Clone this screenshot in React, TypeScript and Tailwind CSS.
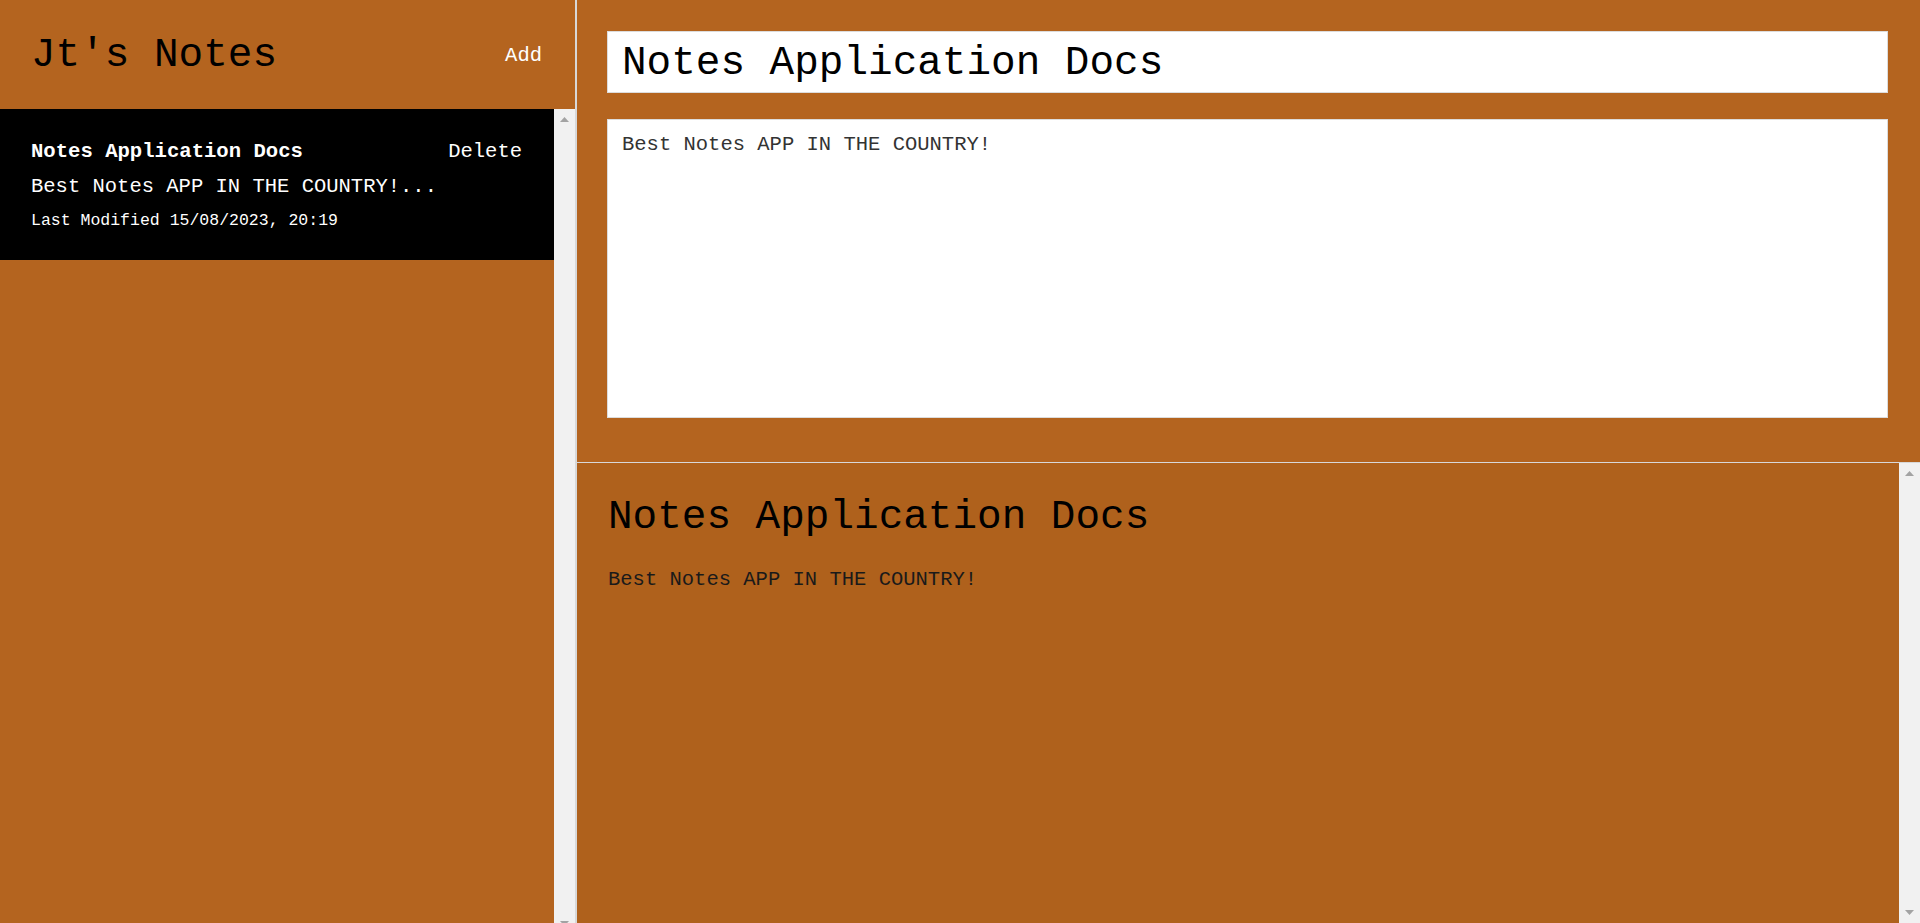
import { useState } from "react";

type Note = {
  id: number;
  title: string;
  body: string;
  lastModified: string;
};

const initialNotes: Note[] = [
  {
    id: 1,
    title: "Notes Application Docs",
    body: "Best Notes APP IN THE COUNTRY!",
    lastModified: "15/08/2023, 20:19",
  },
];

function Arrow({ dir }: { dir: "up" | "down" }) {
  return (
    <svg width="9" height="5" viewBox="0 0 9 5">
      <polygon points={dir === "up" ? "4.5,0 9,5 0,5" : "0,0 9,0 4.5,5"} fill="#a3a3a3" />
    </svg>
  );
}

function Scrollbar() {
  return (
    <div className="flex w-[21px] shrink-0 flex-col bg-[#f1f1f1]">
      <div className="flex h-[21px] items-center justify-center">
        <Arrow dir="up" />
      </div>
      <div className="flex-1" />
      <div className="flex h-[21px] items-center justify-center">
        <Arrow dir="down" />
      </div>
    </div>
  );
}

export default function App() {
  const [notes, setNotes] = useState<Note[]>(initialNotes);
  const [activeId, setActiveId] = useState<number>(1);

  const active = notes.find((n) => n.id === activeId) ?? notes[0];

  function update(field: "title" | "body", value: string) {
    setNotes((prev) => prev.map((n) => (n.id === activeId ? { ...n, [field]: value } : n)));
  }

  function addNote() {
    const id = Date.now();
    setNotes((prev) => [
      { id, title: "Untitled", body: "", lastModified: new Date().toLocaleString("en-GB").slice(0, 17) },
      ...prev,
    ]);
    setActiveId(id);
  }

  function deleteNote(id: number) {
    setNotes((prev) => prev.filter((n) => n.id !== id));
  }

  return (
    <div className="flex h-[923px] w-full overflow-hidden bg-[#b4641f] font-['Liberation_Mono','DejaVu_Sans_Mono',monospace]">
      {/* sidebar */}
      <div className="flex w-[577px] shrink-0 flex-col border-r-2 border-[#d8d8d8]">
        <div className="flex h-[109px] shrink-0 items-center justify-between pl-[31px] pr-[33px]">
          <h1 className="mt-[2px] text-[41px] leading-none text-black">Jt's Notes</h1>
          <button onClick={addNote} className="mt-[4px] text-[20.5px] text-white">
            Add
          </button>
        </div>
        <div className="flex h-[825px] shrink-0">
          <div className="flex-1">
            {notes.map((n) => (
              <div
                key={n.id}
                onClick={() => setActiveId(n.id)}
                className={
                  n.id === activeId
                    ? "h-[151px] cursor-pointer bg-black pl-[31px] pr-[32px] pt-[31px] text-white"
                    : "h-[151px] cursor-pointer pl-[31px] pr-[32px] pt-[31px] text-white"
                }
              >
                <div className="flex items-center justify-between">
                  <strong className="text-[20.6px] leading-[24px]">{n.title}</strong>
                  <button
                    onClick={(e) => {
                      e.stopPropagation();
                      deleteNote(n.id);
                    }}
                    className="text-[20.5px] leading-[24px]"
                  >
                    Delete
                  </button>
                </div>
                <p className="mt-[11px] text-[20.5px] leading-[24px]">{n.body.substring(0, 100) + "..."}</p>
                <small className="mt-[12px] block text-[16.5px] leading-[20px]">
                  Last Modified {n.lastModified}
                </small>
              </div>
            ))}
          </div>
          <Scrollbar />
        </div>
      </div>

      {/* main */}
      <div className="flex min-w-0 flex-1 flex-col">
        <div className="flex h-[463px] shrink-0 flex-col border-b border-[#d8d8d8] pl-[30px] pr-[32px] pt-[31px]">
          <input
            value={active?.title ?? ""}
            onChange={(e) => update("title", e.target.value)}
            className="h-[62px] w-full border border-[#dcdcdc] bg-white px-[14px] pt-[1px] text-[41px] text-black outline-none"
          />
          <textarea
            value={active?.body ?? ""}
            onChange={(e) => update("body", e.target.value)}
            className="mt-[26px] h-[299px] w-full resize-none border border-[#dcdcdc] bg-white px-[14px] pb-[11px] pt-[13px] text-[20.5px] leading-[24px] text-[#333] outline-none"
          />
        </div>
        <div className="flex min-h-0 flex-1 bg-[#af611c]">
          <div className="flex-1 pl-[31px] pt-[32px]">
            <h1 className="text-[41px] leading-[44px] text-black">{active?.title}</h1>
            <p className="mt-[29px] text-[20.5px] leading-[24px] text-[#1a1a1a]">{active?.body}</p>
          </div>
          <Scrollbar />
        </div>
      </div>
    </div>
  );
}
